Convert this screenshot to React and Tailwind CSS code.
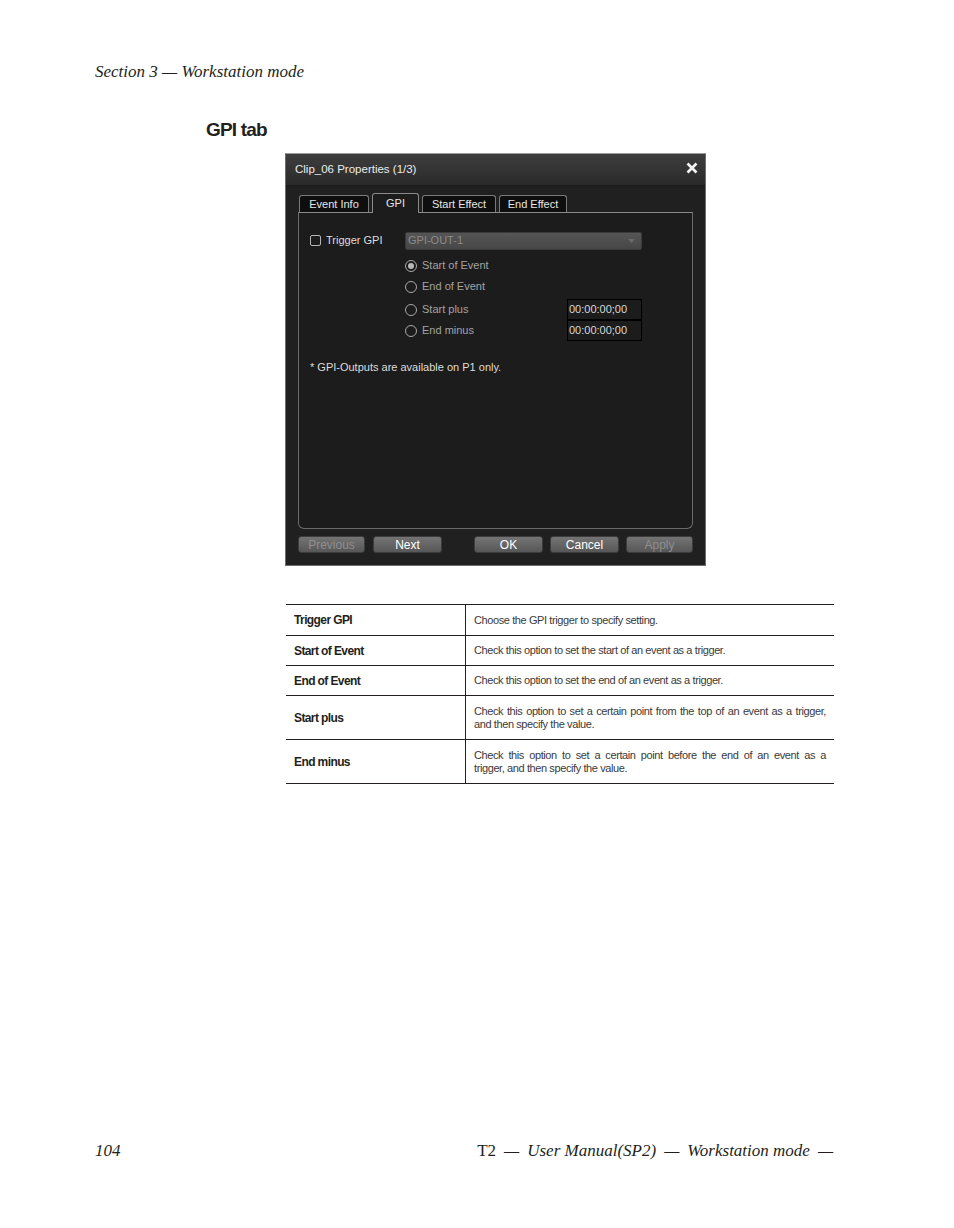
import React from "react";

const ui = { fontFamily: '"Liberation Sans", Arial, sans-serif' };
const serif = { fontFamily: '"Liberation Serif", "Times New Roman", serif' };
const narrow = { fontFamily: '"Liberation Sans Narrow", "Liberation Sans", Arial, sans-serif' };

// second column: one or two lines, first of two lines is justified
const rows = [
  ["Trigger GPI", ["Choose the GPI trigger to specify setting."], 30],
  ["Start of Event", ["Check this option to set the start of an event as a trigger."], 30],
  ["End of Event", ["Check this option to set the end of an event as a trigger."], 30],
  ["Start plus", ["Check this option to set a certain point from the top of an event as a trigger,", "and then specify the value."], 44],
  ["End minus", ["Check this option to set a certain point before the end of an event as a", "trigger, and then specify the value."], 44],
];

function Tab({ label, active, w }) {
  if (active) {
    return (
      <div
        className="h-[20px] -mb-px mx-[3px] flex items-center justify-center rounded-t-[3px] border border-b-0 border-[#8a8a8a] bg-[#1c1c1c] text-[11px] text-[#e6e6e6] relative z-10"
        style={{ width: w }}
      >
        {label}
      </div>
    );
  }
  return (
    <div
      className="h-[17px] flex items-center justify-center rounded-t-[3px] border border-b-0 border-[#7a7a7a] bg-[#0e0e0e] text-[11px] text-[#e6e6e6]"
      style={{ width: w }}
    >
      {label}
    </div>
  );
}

function Radio({ on, label }) {
  return (
    <div className="flex items-center gap-[5px]">
      <span className="w-[12px] h-[12px] rounded-full border border-[#a8a8a8] flex items-center justify-center">
        {on && <span className="w-[6px] h-[6px] rounded-full bg-[#b8b8b8]" />}
      </span>
      <span className="text-[11px] text-[#a3a3a3]">{label}</span>
    </div>
  );
}

function Btn({ label, w, disabled }) {
  return (
    <div
      className={
        "h-[17px] flex items-center justify-center rounded-[3px] border border-[#3c3c3c] bg-gradient-to-b from-[#747474] to-[#575757] text-[12px] " +
        (disabled ? "text-[#8e8e8e]" : "text-white")
      }
      style={{ width: w }}
    >
      {label}
    </div>
  );
}

function Dialog() {
  return (
    <div style={ui} className="w-[421px] h-[413px] ml-[285px] border border-[#6e6e6e] border-t-[#9a9a9a] bg-[#202020] flex flex-col">
      <div className="h-[32px] flex items-center justify-between pl-[9px] pr-[7px] bg-gradient-to-b from-[#3e3e3e] to-[#2a2a2a] border-b border-[#1a1a1a]">
        <span className="text-[11.5px] text-[#ececec] pt-[1px]">Clip_06 Properties (1/3)</span>
        <svg width="12" height="12" viewBox="0 0 12 12" className="-mt-[3px]">
          <path d="M1.5 1.5 L10.5 10.5 M10.5 1.5 L1.5 10.5" stroke="#f4f4f4" strokeWidth="2.6" />
        </svg>
      </div>
      <div className="flex-1 px-[12px] pt-[6px] flex flex-col">
        <div className="flex items-end pl-[1px] h-[20px]">
          <Tab label="Event Info" w={70} />
          <Tab label="GPI" w={47} active />
          <Tab label="Start Effect" w={74} />
          <div className="w-[3px]" />
          <Tab label="End Effect" w={68} />
        </div>
        <div className="h-[317px] rounded-b-[6px] border border-[#6a6a6a] border-t-[#8a8a8a] bg-[#1c1c1c] relative">
          <div className="pt-[18px] pl-[11px] flex items-center h-[37px]">
            <div className="w-[95px] flex items-center gap-[5px]">
              <span className="w-[11px] h-[11px] rounded-[2px] border border-[#b5b5b5]" />
              <span className="text-[11px] text-[#dcdcdc]">Trigger GPI</span>
            </div>
            <div className="w-[237px] h-[18px] rounded-[2px] bg-gradient-to-b from-[#555555] to-[#474747] border border-[#3a3a3a] flex items-center justify-between pl-[2px] pr-[6px]">
              <span className="text-[11px] text-[#8b8b8b]">GPI-OUT-1</span>
              <svg width="7" height="4" viewBox="0 0 7 4">
                <path d="M0 0 L7 0 L3.5 4 Z" fill="#6a6a6a" />
              </svg>
            </div>
          </div>
          <div className="pl-[106px] mt-[5px] flex flex-col">
            <div className="h-[21px] flex items-center"><Radio on label="Start of Event" /></div>
            <div className="h-[21px] flex items-center"><Radio label="End of Event" /></div>
            <div className="h-[21px] mt-[2px] flex items-center">
              <div className="w-[162px]"><Radio label="Start plus" /></div>
              <div className="w-[75px] h-[21px] border border-black flex items-center pl-[1px] text-[11px] text-[#d8d8d8]">00:00:00;00</div>
            </div>
            <div className="h-[21px] flex items-center">
              <div className="w-[162px]"><Radio label="End minus" /></div>
              <div className="w-[75px] h-[21px] border border-black flex items-center pl-[1px] text-[11px] text-[#d8d8d8]">00:00:00;00</div>
            </div>
          </div>
          <div className="pl-[11px] mt-[19px] text-[11px] text-[#dcdcdc] leading-[14px]">
            * GPI-Outputs are available on P1 only.
          </div>
        </div>
        <div className="flex items-center mt-[7px]">
          <Btn label="Previous" w={67} disabled />
          <div className="w-[8px]" />
          <Btn label="Next" w={69} />
          <div className="w-[32px]" />
          <Btn label="OK" w={69} />
          <div className="w-[7px]" />
          <Btn label="Cancel" w={69} />
          <div className="w-[7px]" />
          <Btn label="Apply" w={67} disabled />
        </div>
      </div>
    </div>
  );
}

export default function App() {
  return (
    <div className="w-[954px] h-[1228px] bg-white relative flex flex-col text-[#231f20]">
      <div style={serif} className="italic text-[17px] pl-[95px] pt-[62px] leading-[20px]">
        Section 3 — Workstation mode
      </div>
      <div style={narrow} className="font-bold text-[19px] tracking-[-0.8px] pl-[206px] mt-[37px] leading-[22px]">
        GPI tab
      </div>
      <div className="mt-[12px]">
        <Dialog />
      </div>
      <div className="ml-[286px] mt-[38px] w-[548px] border-t border-b border-[#231f20]" style={narrow}>
        {rows.map(([k, lines, h], i) => (
          <div
            key={k}
            className={"flex " + (i > 0 ? "border-t border-[#231f20]" : "")}
            style={{ height: h }}
          >
            <div className="w-[180px] border-r border-[#231f20] flex items-center pl-[8px] font-bold text-[12px] tracking-[-0.6px]">
              {k}
            </div>
            <div className="flex-1 flex flex-col justify-center pl-[8px] pr-[8px] text-[11px] tracking-[-0.4px] leading-[13px] text-[#3a3a3a]">
              {lines.length > 1 ? (
                <>
                  <span className="block text-justify [text-align-last:justify]">{lines[0]}</span>
                  <span className="block">{lines[1]}</span>
                </>
              ) : (
                <span>{lines[0]}</span>
              )}
            </div>
          </div>
        ))}
      </div>
      <div className="flex-1" />
      <div style={serif} className="italic text-[17px] pl-[95px] pr-[121px] pb-[67px] flex justify-between leading-[20px]">
        <span>104</span>
        <span className="flex gap-[8px]">
          <span className="not-italic">T2</span>
          <span>—</span>
          <span>User Manual(SP2)</span>
          <span>—</span>
          <span>Workstation mode</span>
          <span>—</span>
        </span>
      </div>
    </div>
  );
}
